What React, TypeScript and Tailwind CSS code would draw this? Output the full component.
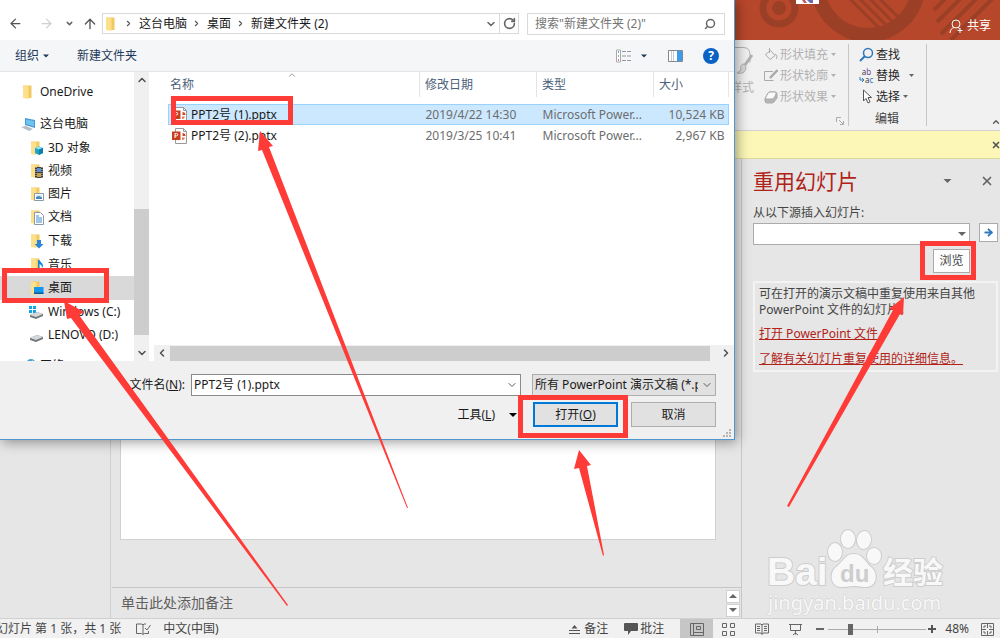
import type { ReactNode } from 'react';
import {
  ArrowLeft,
  ArrowRight,
  ArrowUp,
  ChevronDown,
  ChevronLeft,
  ChevronRight,
  ChevronUp,
  RotateCw,
  Search,
  X,
} from 'lucide-react';
import { clsx } from 'clsx';

type FolderKind =
  | 'folder'
  | 'pc'
  | 'cube'
  | 'video'
  | 'picture'
  | 'document'
  | 'download'
  | 'music'
  | 'desktop'
  | 'windows'
  | 'drive'
  | 'network';

const NAV_ITEMS: { label: string; kind: FolderKind; className: string }[] = [
  { label: 'OneDrive', kind: 'folder', className: 'mt-2 h-6 pl-5' },
  { label: '这台电脑', kind: 'pc', className: 'mt-2 h-6 pl-5' },
  { label: '3D 对象', kind: 'cube', className: 'h-[23px] pl-7' },
  { label: '视频', kind: 'video', className: 'h-[23px] pl-7' },
  { label: '图片', kind: 'picture', className: 'h-[23px] pl-7' },
  { label: '文档', kind: 'document', className: 'h-6 pl-7' },
  { label: '下载', kind: 'download', className: 'h-6 pl-7' },
  { label: '音乐', kind: 'music', className: 'h-[23px] pl-7' },
  { label: '桌面', kind: 'desktop', className: 'h-6 pl-7 bg-[#d9d9d9]' },
  { label: 'Windows (C:)', kind: 'windows', className: 'h-[23px] pl-7' },
  { label: 'LENOVO (D:)', kind: 'drive', className: 'h-[23px] pl-7' },
  { label: '网络', kind: 'network', className: 'mt-2 h-6 pl-5' },
];

const FILES = [
  {
    name: 'PPT2号 (1).pptx',
    date: '2019/4/22 14:30',
    type: 'Microsoft Power...',
    size: '10,524 KB',
    selected: true,
  },
  {
    name: 'PPT2号 (2).pptx',
    date: '2019/3/25 10:41',
    type: 'Microsoft Power...',
    size: '2,967 KB',
    selected: false,
  },
];

const CRUMBS = ['这台电脑', '桌面', '新建文件夹 (2)'];

function Caret({ className = 'text-[#444]' }: { className?: string }) {
  return (
    <svg viewBox="0 0 8 4" className={clsx('h-1 w-2 shrink-0', className)}>
      <path d="M0 0h8L4 4z" fill="currentColor" />
    </svg>
  );
}

function NavIcon({ kind }: { kind: FolderKind }) {
  const hasFolder = !['pc', 'windows', 'drive', 'network'].includes(kind);
  return (
    <svg viewBox="0 0 16 16" className="h-4 w-4 shrink-0">
      {hasFolder ? (
        <g>
          <path d="M3 1.500h8.500v12.500H3z" fill="#f0c963" />
          <path d="M3 1.500l5.500 1v12.500L3 14z" fill="#ffe08a" />
        </g>
      ) : null}
      {kind === 'cube' ? (
        <g>
          <path d="M7 8l4-1.500L15 8v5l-4 2-4-2z" fill="#1ea4c9" />
          <path d="M7 8l4-1.500L15 8l-4 1.500z" fill="#8be0f2" />
          <path d="M11 9.500L15 8v5l-4 2z" fill="#0d7fa8" />
        </g>
      ) : null}
      {kind === 'video' ? (
        <g>
          <path d="M7 4h8v11H7z" fill="#3b3b3b" />
          <path d="M9 5h4v4H9z" fill="#5f8fd0" />
          <path d="M9 10h4v4H9z" fill="#c2a34a" />
          <path d="M8 4v11M14 4v11" stroke="#ddd" strokeDasharray="1 1" />
        </g>
      ) : null}
      {kind === 'picture' ? (
        <g>
          <path d="M6.500 7.500h9v7h-9z" fill="#fff" stroke="#8a9aa8" />
          <path d="M8 9h6v4H8z" fill="#cfe6f7" />
          <path d="M8 13v-2l3-1 3 1.500V13z" fill="#4a86b8" />
        </g>
      ) : null}
      {kind === 'document' ? (
        <g>
          <path d="M6.500 3.500h6l3 3v9h-9z" fill="#fff" stroke="#8a9aa8" />
          <path d="M8 7h3M8 9h6M8 11h6M8 13h6" stroke="#3f8fd0" />
        </g>
      ) : null}
      {kind === 'download' ? (
        <path d="M9 7h4v4h2.500L11 15.500 6.500 11H9z" fill="#2b86d9" />
      ) : null}
      {kind === 'music' ? (
        <g fill="#1487d8">
          <path d="M10 3h1.500c.5 2 3.500 3 3.500 6l-1 2c0-3-1.500-3.500-2.500-4v6H10z" />
          <ellipse cx="9" cy="13" rx="2.500" ry="2" />
        </g>
      ) : null}
      {kind === 'desktop' ? (
        <g>
          <path d="M6 7h9.500v7H6z" fill="#1296ee" />
          <path d="M6 12.500h9.500V14H6z" fill="#0b5e9e" />
        </g>
      ) : null}
      {kind === 'pc' ? (
        <g>
          <path d="M5 2l10 2v8L5 9z" fill="#4b97cf" />
          <path d="M6 3.500l8 1.500v5.500L6 8z" fill="#6fc3f2" />
          <path d="M1 11l5-1 7 3-4 2z" fill="#b5bec6" />
        </g>
      ) : null}
      {kind === 'windows' ? (
        <path d="M1 2h3v3H1zM5 2h3v3H5zM1 6h3v3H1zM5 6h3v3H5z" fill="#12a5ee" />
      ) : null}
      {kind === 'windows' || kind === 'drive' ? (
        <g>
          <path d="M2 11l7-3 6 2v2l-7 3-6-2z" fill="#72777b" />
          <path d="M2 11l7-3 6 2-7 3z" fill="#d5d8da" />
        </g>
      ) : null}
      {kind === 'network' ? (
        <g>
          <circle cx="11" cy="6" r="5" fill="#4aa3d2" />
          <path d="M8 3l3 1-1 3-3-1zM12 2l3 2-2 2z" fill="#bfe3f3" />
        </g>
      ) : null}
    </svg>
  );
}

function PptxIcon() {
  return (
    <svg viewBox="0 0 16 16" className="h-4 w-4 shrink-0">
      <path d="M3.500.5h8l3 3v12h-11z" fill="#fff" stroke="#9a9a9a" />
      <path d="M11.500.5v3h3" fill="none" stroke="#9a9a9a" />
      <path d="M10 6.500v3h3a3 3 0 0 1-3 2.500z" fill="#e8754f" />
      <path d="M10.500 5a3 3 0 0 1 3 3h-3z" fill="#d24726" />
      <path d="M0 3.500h8.500v8.500H0z" fill="#c8401f" />
      <path d="M3 10V5.500h1.500a1.200 1.200 0 0 1 0 2.400H3" fill="none" stroke="#fff" />
    </svg>
  );
}

function Breadcrumbs() {
  return (
    <div className="flex h-10 items-center px-2 pt-[7px]">
      <button type="button" aria-label="后退" className="text-[#555]">
        <ArrowLeft size={15} strokeWidth={2} />
      </button>
      <button type="button" aria-label="前进" className="ml-4 text-[#d0d0d0]">
        <ArrowRight size={15} strokeWidth={2} />
      </button>
      <button type="button" aria-label="最近的位置" className="ml-[11px] text-[#666]">
        <ChevronDown size={9} strokeWidth={4} />
      </button>
      <button type="button" aria-label="向上" className="ml-2 text-[#555]">
        <ArrowUp size={16} strokeWidth={2} />
      </button>
      <div className="ml-1 flex h-[21px] flex-1 items-center border border-[#d9d9d9]">
        <NavIcon kind="folder" />
        <nav className="flex flex-1 items-center">
          {CRUMBS.map((crumb) => (
            <span key={crumb} className="flex items-center">
              <ChevronRight size={9} strokeWidth={3} className="mr-[6px] ml-[5px] text-[#555]" />
              <button type="button">{crumb}</button>
            </span>
          ))}
        </nav>
        <button
          type="button"
          aria-label="以前的位置"
          className="flex h-full w-[18px] items-center justify-center border-r border-[#d9d9d9] text-[#666]"
        >
          <ChevronDown size={12} strokeWidth={3} />
        </button>
        <button
          type="button"
          aria-label="刷新"
          className="flex h-full w-[18px] items-center justify-center text-[#666]"
        >
          <RotateCw size={13} strokeWidth={3} />
        </button>
      </div>
      <div className="mr-px ml-2 flex h-[22px] w-[198px] items-center border border-[#d9d9d9] pr-2 pl-[7px]">
        <input
          aria-label="搜索"
          placeholder={'搜索"新建文件夹 (2)"'}
          className="w-full min-w-0 flex-1 outline-none placeholder:text-[#757575]"
        />
        <Search size={12} strokeWidth={3} className="-scale-x-100 text-[#666]" />
      </div>
    </div>
  );
}

function DialogToolbar() {
  return (
    <div className="flex h-8 items-center border-b border-[#e3e5e8] bg-[#f5f6f7] pt-px pr-[15px] pl-[15px] text-[#1e395b]">
      <button type="button" className="flex items-center gap-1">
        组织
        <Caret className="w-[6px] text-[#1e395b]" />
      </button>
      <button type="button" className="ml-7">
        新建文件夹
      </button>
      <div className="ml-auto flex items-center">
        <button type="button" aria-label="更改视图" className="flex items-center gap-[9px]">
          <svg viewBox="0 0 16 14" className="h-[14px] w-4">
            <path d="M.5 1h4v12h-4z" fill="#fff" stroke="#aaa" />
            <path d="M2 3h1" stroke="#3c87c7" strokeWidth="1.500" />
            <path d="M2 7h1" stroke="#6a6" strokeWidth="1.500" />
            <path d="M2 11h1" stroke="#c44" strokeWidth="1.500" />
            <path
              d="M6 2.500h4M11 2.500h4M6 7h4M11 7h4M6 11.500h4M11 11.500h4"
              stroke="#8f98a3"
            />
          </svg>
          <Caret className="w-[6px] text-[#1e395b]" />
        </button>
        <button type="button" aria-label="显示预览窗格" className="ml-[21px]">
          <svg viewBox="0 0 15 12" className="h-3 w-[15px]">
            <path d="M.5.5h14v11H.5z" fill="#fff" stroke="#808890" />
            <path d="M3.500 1v10M5.500 1v10" stroke="#c8ccd0" />
            <path d="M9 1h5v10H9z" fill="#3d9be9" />
          </svg>
        </button>
        <button
          type="button"
          aria-label="获取帮助"
          className="ml-5 flex h-4 w-4 items-center justify-center rounded-full bg-[#0a63c4] text-xs font-bold text-white"
        >
          ?
        </button>
      </div>
    </div>
  );
}

function FolderTree() {
  return (
    <div className="flex h-[289px] w-[149px] shrink-0">
      <ul className="flex-1 overflow-hidden">
        {NAV_ITEMS.map((item) => (
          <li key={item.label} className={clsx('flex items-center', item.className)}>
            <button type="button" className="flex items-center gap-1 whitespace-nowrap">
              <NavIcon kind={item.kind} />
              {item.label}
            </button>
          </li>
        ))}
      </ul>
      <div className="flex w-[15px] flex-col items-center bg-[#f0f0f0] text-[#505050]">
        <ChevronUp size={12} strokeWidth={3} className="mt-[2px]" />
        <div className="mt-[123px] h-[126px] w-full bg-[#cdcdcd]" />
        <ChevronDown size={12} strokeWidth={3} className="mt-auto mb-[2px]" />
      </div>
    </div>
  );
}

function FileList() {
  return (
    <div className="flex min-w-0 flex-1 flex-col pl-[5px]">
      <div className="relative flex-1 pr-[5px] pl-[14px]">
        <ChevronUp
          size={10}
          strokeWidth={2}
          className="absolute top-[-2px] left-[133px] text-[#888]"
        />
        <table className="w-full table-fixed border-collapse text-left">
          <colgroup>
            <col />
            <col className="w-[117px]" />
            <col className="w-[117px]" />
            <col className="w-[75px]" />
          </colgroup>
          <thead>
            <tr className="h-[25px] text-[#4c607a]">
              <th className="pl-[2px] font-normal">名称</th>
              <th className="border-l border-[#e5e5e5] pl-[5px] font-normal">修改日期</th>
              <th className="border-l border-[#e5e5e5] pl-[5px] font-normal">类型</th>
              <th className="border-x border-[#e5e5e5] pl-[5px] font-normal">大小</th>
            </tr>
          </thead>
          <tbody>
            <tr className="h-[7px]" />
            {FILES.map((file) => (
              <tr
                key={file.name}
                className={clsx(
                  'h-[21px] leading-5 text-[#6d6d6d]',
                  file.selected && 'bg-[#cce8ff] outline -outline-offset-1 outline-[#99d1ff]',
                )}
              >
                <td className="pl-1">
                  <div className="flex items-center gap-[3px] text-[#1a1a1a]">
                    <PptxIcon />
                    {file.name}
                  </div>
                </td>
                <td className="pl-[6px]">{file.date}</td>
                <td className="pl-[6px]">{file.type}</td>
                <td className="pr-1 text-right">{file.size}</td>
              </tr>
            ))}
          </tbody>
        </table>
      </div>
      <div className="flex h-4 items-center bg-[#f0f0f0] text-[#505050]">
        <ChevronLeft size={12} strokeWidth={3} className="mx-[2px]" />
        <div className="h-[15px] flex-1 bg-[#cdcdcd]" />
        <ChevronRight size={12} strokeWidth={3} className="mr-[2px] ml-[10px]" />
      </div>
    </div>
  );
}

function DialogFooter() {
  return (
    <div className="flex h-[78px] flex-col items-end gap-[6px] bg-[#f0f0f0] pt-[13px] pr-[18px]">
      <div className="flex items-center">
        <label htmlFor="filename">
          文件名(<u>N</u>):
        </label>
        <div className="ml-[6px] flex h-[22px] w-[330px] items-center border border-[#8a8a8a] bg-white pr-[2px] pl-[2px]">
          <input
            id="filename"
            defaultValue="PPT2号 (1).pptx"
            className="min-w-0 flex-1 outline-none"
          />
          <ChevronDown size={12} strokeWidth={2} className="text-[#555]" />
        </div>
        <div className="ml-[11px] flex h-[22px] w-[184px] items-center border border-[#adadad] bg-[#e1e1e1] pr-[2px] pl-[2px]">
          <select
            aria-label="文件类型"
            className="min-w-0 flex-1 appearance-none overflow-hidden outline-none"
          >
            <option>所有 PowerPoint 演示文稿 (*.pptx;*.ppt)</option>
          </select>
          <ChevronDown size={12} strokeWidth={2} className="ml-[3px] text-[#555]" />
        </div>
      </div>
      <div className="flex items-center">
        <button type="button" className="flex items-center gap-[14px]">
          <span>
            工具(<u>L</u>)
          </span>
          <Caret className="text-black" />
        </button>
        <button
          type="button"
          className="ml-4 h-[25px] w-[85px] border-2 border-[#0078d7] bg-[#e1e1e1]"
        >
          打开(<u>O</u>)
        </button>
        <button
          type="button"
          className="ml-[13px] h-[25px] w-[85px] border border-[#adadad] bg-[#e1e1e1]"
        >
          取消
        </button>
      </div>
      <svg viewBox="0 0 9 9" className="-mt-1 -mr-4 h-[9px] w-[9px] shrink-0 fill-[#b5b5b5]">
        <path d="M6 0h2v2H6zM3 3h2v2H3zM6 3h2v2H6zM0 6h2v2H0zM3 6h2v2H3zM6 6h2v2H6z" />
      </svg>
    </div>
  );
}

function OpenDialog() {
  return (
    <div
      role="dialog"
      aria-label="打开"
      className="absolute top-0 left-0 w-[735px] border-r border-b border-[#4f98cf] bg-white text-[#1a1a1a] shadow-[2px_2px_12px_rgba(0,0,0,0.4)]"
    >
      <Breadcrumbs />
      <DialogToolbar />
      <div className="flex">
        <FolderTree />
        <FileList />
      </div>
      <DialogFooter />
    </div>
  );
}

function TitleBar() {
  return (
    <header className="relative flex h-10 items-center justify-end overflow-hidden bg-[#b7472a] pt-3 pr-[9px] text-white">
      <svg
        viewBox="0 0 265 40"
        className="absolute top-0 right-0 h-10 w-[265px]"
        fill="none"
        stroke="#9c3f27"
      >
        <circle cx="44" cy="8" r="16" strokeWidth="7" />
        <circle cx="44" cy="8" r="7" fill="#9c3f27" stroke="none" />
        <circle cx="133" cy="-15" r="50" strokeWidth="14" />
        <path d="M102-14l48 48M112-14l46 46M122-14l42 42M132-14l36 36" strokeWidth="3" />
        <path d="M199 10l18-18M202 22l36-36M206 34l50-50M216 40l44-44" strokeWidth="4" />
        <path d="M61 0h23v4H61z" fill="#fff" stroke="none" />
        <path d="M67 0h3l2 3h-3z" fill="#c25a5a" stroke="none" />
        <path d="M72 0h6v3h-3z" fill="#6a6ab0" stroke="none" />
      </svg>
      <button type="button" className="relative flex items-center gap-[3px]">
        <svg viewBox="0 0 15 15" className="h-[15px] w-[15px]" fill="none" stroke="#fff">
          <circle cx="7" cy="5" r="4" />
          <path d="M1 14c0-3 2-5 4-5.500M9 8.500c1 .5 1.500 1 2 1.500M11 9v5M8.500 11.500h5" />
        </svg>
        共享
      </button>
    </header>
  );
}

function RibbonButton({
  icon,
  label,
  disabled = false,
  caret = true,
  caretClassName = 'ml-px',
}: {
  icon: ReactNode;
  label: string;
  disabled?: boolean;
  caret?: boolean;
  caretClassName?: string;
}) {
  return (
    <button
      type="button"
      disabled={disabled}
      className={clsx(
        'flex h-[21px] items-center gap-[2px]',
        disabled ? 'text-[#b1b1b1]' : 'text-[#262626]',
      )}
    >
      {icon}
      <span>{label}</span>
      {caret ? (
        <svg viewBox="0 0 5 3" className={clsx('h-[3px] w-[5px]', caretClassName)}>
          <path d="M0 0h5L2.500 3z" fill={disabled ? '#b1b1b1' : '#666'} />
        </svg>
      ) : null}
    </button>
  );
}

function Ribbon() {
  return (
    <div className="flex h-[91px] justify-end border-b border-[#d2d2d2] bg-[#f1f1f1] pt-1 pb-[3px]">
      <div className="flex w-[30px] flex-col text-[#b1b1b1]">
        <svg viewBox="0 0 30 34" className="mt-[2px] h-[34px] w-[30px]" fill="none" stroke="#b1b1b1">
          <path d="M0 1.500h13q7 0 7 7v8" />
          <path d="M22 9l-7 10" strokeWidth="3" />
          <path d="M14 18c-3 0-4 3-3 6l-4 3c4 1 9 0 9-6z" fill="#d8d8d8" />
        </svg>
        <span className="whitespace-nowrap">样式</span>
        <span className="-ml-2 mt-auto text-[#444]">图</span>
      </div>
      <div className="flex w-[88px] flex-col pl-1">
        <RibbonButton
          disabled
          label="形状填充"
          icon={
            <svg viewBox="0 0 14 14" className="h-[14px] w-[14px]" fill="none" stroke="#aaa">
              <path d="M1.500 6.500l5-4 4.500 5-5 4zM5.500 0v5M11 6c2 1 2.500 2 1.500 5" />
            </svg>
          }
        />
        <RibbonButton
          disabled
          label="形状轮廓"
          icon={
            <svg viewBox="0 0 14 14" className="h-[14px] w-[14px]" fill="none" stroke="#aaa">
              <path d="M9 2.500H.5v9h9" />
              <path d="M13.500 1L6 9" strokeWidth="2.500" />
            </svg>
          }
        />
        <RibbonButton
          disabled
          label="形状效果"
          icon={
            <svg viewBox="0 0 14 14" className="h-[14px] w-[14px]" stroke="#aaa">
              <path d="M1 9l3-6q1-1 2-1h5q2 0 2 2v4l-3 4q-1 1-2 1H3q-2 0-2-2z" fill="#b5b5b5" />
              <path d="M1 9l3-6q1-1 2-1h5q2 0 1 2l-2 4q-1 1-2 1z" fill="#fafafa" />
            </svg>
          }
        />
        <svg
          viewBox="0 0 8 8"
          className="mt-auto mr-1 mb-[2px] h-2 w-2 self-end"
          fill="none"
          stroke="#aaa"
        >
          <path d="M.5 5V.5H5M3 3l4 4M7.500 4v3.500H4" />
        </svg>
      </div>
      <div className="mb-px w-px bg-[#c6c6c6]" />
      <div className="flex w-[77px] flex-col pl-[10px]">
        <RibbonButton
          label="查找"
          caret={false}
          icon={
            <svg viewBox="0 0 15 15" className="h-[15px] w-[15px]" fill="none" stroke="#2f78bd">
              <circle cx="9" cy="6" r="4.500" strokeWidth="1.500" />
              <path d="M6 9L1 14" strokeWidth="2" />
            </svg>
          }
        />
        <RibbonButton
          label="替换"
          caretClassName="ml-[7px]"
          icon={
            <span className="flex w-[15px] flex-col text-[8px] leading-[8px] text-[#444]">
              <span>
                a<span className="text-[#7a3fa0]">b</span>
              </span>
              <span className="flex items-center">
                <svg viewBox="0 0 6 6" className="h-[6px] w-[6px] shrink-0">
                  <path d="M1 0v3h4M3 1l2 2-2 2" fill="none" stroke="#2f78bd" />
                </svg>
                a<span className="text-[#2f78bd]">c</span>
              </span>
            </span>
          }
        />
        <RibbonButton
          label="选择"
          icon={
            <svg viewBox="0 0 15 15" className="h-[15px] w-[15px]" fill="#fff" stroke="#555">
              <path d="M4.500 1v11l2.500-2.500 2 4.500 2-1-2-4.500h3.500z" />
            </svg>
          }
        />
        <span className="mt-auto pl-4 text-[#444]">编辑</span>
      </div>
      <div className="mb-px w-px bg-[#c6c6c6]" />
      <div className="flex w-[73px] items-end justify-end">
        <button type="button" aria-label="折叠功能区" className="-mr-px text-[#555]">
          <ChevronUp size={10} strokeWidth={3} />
        </button>
      </div>
    </div>
  );
}

function TaskPane() {
  return (
    <aside className="flex w-[259px] shrink-0 flex-col border-l border-[#c6c6c6] pl-[11px] text-[#444]">
      <div className="mt-[6px] flex h-8 items-center">
        <h2 className="flex-1 text-[21px] leading-8 text-[#b02318]">重用幻灯片</h2>
        <button type="button" aria-label="任务窗格选项" className="mr-[28px]">
          <Caret className="w-[9px] text-[#666]" />
        </button>
        <button type="button" aria-label="关闭" className="mr-[6px] text-[#666]">
          <X size={14} strokeWidth={3} />
        </button>
      </div>
      <label htmlFor="source" className="mt-[7px] leading-[18px]">
        从以下源插入幻灯片:
      </label>
      <div className="mt-[1px] flex items-start gap-[9px]">
        <div className="flex h-[22px] flex-1 items-center border border-[#ababab] bg-white pr-[3px]">
          <input id="source" className="min-w-0 flex-1 outline-none" />
          <Caret className="text-[#666]" />
        </div>
        <button
          type="button"
          aria-label="转到"
          className="mr-[2px] flex h-[19px] w-[19px] items-center justify-center border border-[#ababab] bg-white text-[#2f78bd]"
        >
          <ArrowRight size={11} strokeWidth={4} />
        </button>
      </div>
      <button
        type="button"
        className="mt-1 mr-[30px] h-6 w-[37px] self-end border border-[#ababab] bg-[#fdfdfd]"
      >
        浏览
      </button>
      <div className="mt-2 mr-[2px] flex h-[91px] flex-col items-start border-2 border-[#f3f3f3] pt-[3px] pl-1">
        <p className="leading-4">
          可在打开的演示文稿中重复使用来自其他
          <br />
          PowerPoint 文件的幻灯片。
        </p>
        <a href="#open" className="mt-2 leading-4 text-[#b02318] underline">
          打开 PowerPoint 文件
        </a>
        <a href="#more" className="mt-[9px] leading-4 text-[#b02318] underline">
          了解有关幻灯片重复使用的详细信息。
        </a>
      </div>
    </aside>
  );
}

function Workspace() {
  return (
    <main className="flex flex-1 bg-[#e6e6e6]">
      <div className="w-[111px] shrink-0 border-r border-[#cfcfcf]" />
      <div className="flex min-w-0 flex-1 flex-col">
        <div className="flex flex-1 pt-2 pr-[25px] pb-[47px] pl-[9px]">
          <div className="flex-1 border border-[#d0d0d0] bg-white" />
        </div>
        <div className="ml-px flex h-[31px] items-center border-t border-[#c6c6c6] pl-[9px] text-sm text-[#5f5f5f]">
          <p className="flex-1">单击此处添加备注</p>
          <div className="mr-px flex w-[14px] flex-col gap-px">
            <button
              type="button"
              aria-label="上移"
              className="flex h-[13px] items-center justify-center border border-[#d0d0d0] bg-white"
            >
              <Caret className="rotate-180 text-[#666]" />
            </button>
            <button
              type="button"
              aria-label="下移"
              className="flex h-[13px] items-center justify-center border border-[#d0d0d0] bg-white"
            >
              <Caret className="text-[#666]" />
            </button>
          </div>
        </div>
      </div>
      <TaskPane />
    </main>
  );
}

function StatusBar() {
  return (
    <footer className="flex h-5 items-center overflow-hidden border-t border-[#d0d0d0] bg-[#f1f1f1] pt-px text-[#444]">
      <span className="-ml-1 whitespace-pre">幻灯片 第 1 张，共 1 张</span>
      <svg viewBox="0 0 15 12" className="ml-[15px] h-3 w-[15px]" fill="none" stroke="#666">
        <path d="M10 1H8L7 2 6 1H.5v9.500h5l1.500 1 1.500-1h4V8M7 2v9M9 5l2 2 3.500-5" />
      </svg>
      <span className="ml-3">中文(中国)</span>
      <button type="button" className="ml-auto flex items-center gap-1">
        <svg viewBox="0 0 11 11" className="h-[11px] w-[11px]">
          <path d="M2.500 4.500L5.500 1l3 3.500z" fill="#555" />
          <path d="M0 6.500h11M0 9.500h11" stroke="#555" />
        </svg>
        备注
      </button>
      <button type="button" className="ml-4 flex items-center gap-[2px]">
        <svg viewBox="0 0 14 12" className="h-3 w-[14px]">
          <path d="M1 0h12q1 0 1 1v6q0 1-1 1H7l-3 4V8H1Q0 8 0 7V1q0-1 1-1z" fill="#555" />
        </svg>
        批注
      </button>
      <button
        type="button"
        aria-label="普通视图"
        className="ml-4 flex h-5 w-[33px] items-center justify-center bg-[#c6c6c6]"
      >
        <svg viewBox="0 0 14 13" className="h-[13px] w-[14px]" fill="none" stroke="#666">
          <path d="M.5.5h13v12H.5zM3.500.5v12M3.500 9.500h10M6.500 3.500h4v3h-4z" />
        </svg>
      </button>
      <button type="button" aria-label="幻灯片浏览" className="ml-[9px]">
        <svg viewBox="0 0 13 13" className="h-[13px] w-[13px]" fill="none" stroke="#666">
          <path d="M.5.5h4v4h-4zM8.500.5h4v4h-4zM.5 8.500h4v4h-4zM8.500 8.500h4v4h-4z" />
        </svg>
      </button>
      <button type="button" aria-label="阅读视图" className="ml-5">
        <svg viewBox="0 0 14 12" className="h-3 w-[14px]" fill="none" stroke="#666">
          <path d="M7 2L6 1H.5v9H6l1 1.500 1-1.500h5.500V1H8zv9M2 3.500h3M2 5.500h3M2 7.500h3M9 3.500h3M9 5.500h3M9 7.500h3" />
        </svg>
      </button>
      <button type="button" aria-label="幻灯片放映" className="ml-5">
        <svg viewBox="0 0 13 13" className="h-[13px] w-[13px]" fill="none" stroke="#666">
          <path d="M0 1.500h13M1.500 2v5.500h10V2M6.500 7.500v4M4 12l2.500-2L9 12" />
        </svg>
      </button>
      <button type="button" aria-label="缩小" className="ml-[14px] h-[2px] w-2 bg-[#666]" />
      <div className="relative ml-1 flex w-[98px] items-center">
        <span className="absolute left-[49px] h-[7px] w-px bg-[#aaa]" />
        <input
          type="range"
          aria-label="缩放"
          min={0}
          max={100}
          defaultValue={21}
          className="relative h-px w-full appearance-none bg-[#ababab] [&::-webkit-slider-thumb]:h-[11px] [&::-webkit-slider-thumb]:w-[5px] [&::-webkit-slider-thumb]:appearance-none [&::-webkit-slider-thumb]:bg-[#666]"
        />
      </div>
      <button type="button" aria-label="放大" className="ml-[2px]">
        <svg viewBox="0 0 8 8" className="h-2 w-2" stroke="#555" strokeWidth="2">
          <path d="M4 0v8M0 4h8" />
        </svg>
      </button>
      <span className="ml-[9px]">48%</span>
      <button type="button" aria-label="适应窗口" className="mr-[6px] ml-3">
        <svg viewBox="0 0 13 13" className="h-[13px] w-[13px]" fill="none" stroke="#666">
          <path d="M.5.500h12v12H.5z" />
          <path d="M3 5V3h2M8 3h2v2M10 8v2H8M5 10H3V8M6.500 1v4M6.500 8v4M1 6.500h4M8 6.500h4" />
        </svg>
      </button>
    </footer>
  );
}

function Watermark() {
  return (
    <svg
      viewBox="0 0 190 90"
      className="pointer-events-none absolute right-[47px] bottom-[21px] h-[90px] w-[190px]"
      fill="#f8f8f8"
      stroke="#cdcdcd"
      strokeWidth="2"
      paintOrder="stroke"
    >
      <g fontFamily='"Liberation Sans", "Noto Sans CJK SC", sans-serif' fontWeight="700">
        <text x="4" y="58" fontSize="39">
          Bai
        </text>
        <ellipse cx="72" cy="25" rx="7" ry="9" />
        <ellipse cx="85" cy="12" rx="7" ry="9" />
        <ellipse cx="101" cy="13" rx="7" ry="9" transform="rotate(8 101 13)" />
        <ellipse cx="111" cy="29" rx="7" ry="8" />
        <path d="M91 27c9 0 11 8 17 13 7 5 7 20-5 20-6 0-8-1-12-1s-6 1-12 1c-12 0-13-14-6-20 7-5 9-13 18-13z" />
        <text x="77" y="55" fontSize="24" fill="#cdcdcd" stroke="none">
          du
        </text>
        <text x="120" y="56" fontSize="30">
          经验
        </text>
      </g>
      <text x="5" y="83" fontSize="20" strokeWidth="1" stroke="#cfcfcf">
        jingyan.baidu.com
      </text>
    </svg>
  );
}

// Hand-drawn callouts sit above both windows.
function Callouts() {
  return (
    <svg
      viewBox="0 0 1000 638"
      className="pointer-events-none absolute top-0 left-0 h-[638px] w-[1000px]"
      fill="#ff3b38"
    >
      <g fill="none" stroke="#ff3b38" strokeWidth="5">
        <rect x="173.500" y="98.500" width="117" height="24" />
        <rect x="4.500" y="270.500" width="102" height="30" />
        <rect x="520.500" y="397.500" width="105" height="38" />
        <rect x="922.500" y="243.500" width="51" height="34" />
      </g>
      <path d="M260 131l13 15-4 1L408 508l-1 0L262 150l-4 1z" />
      <path d="M64 301l20 11-5 3L288 605l-1 1L71 318l-4 1z" />
      <path d="M579 450l12 15-4 1 17 89-1 1-24-88-5 1z" />
      <path d="M904 297l-1 18-3-1L789 507l-2-1L893 310l-4-1z" />
    </svg>
  );
}

export default function App() {
  return (
    <div className="relative flex min-h-screen flex-col overflow-hidden bg-[#e6e6e6] font-['Noto_Sans','Noto_Sans_CJK_SC',sans-serif] text-xs">
      <TitleBar />
      <Ribbon />
      <div className="flex h-7 items-center justify-end border-b border-[#dcd79c] bg-[#fcf7b6]">
        <button type="button" aria-label="关闭消息" className="-mr-px text-[#555]">
          <X size={10} strokeWidth={4} />
        </button>
      </div>
      <Workspace />
      <StatusBar />
      <OpenDialog />
      <Watermark />
      <Callouts />
    </div>
  );
}
